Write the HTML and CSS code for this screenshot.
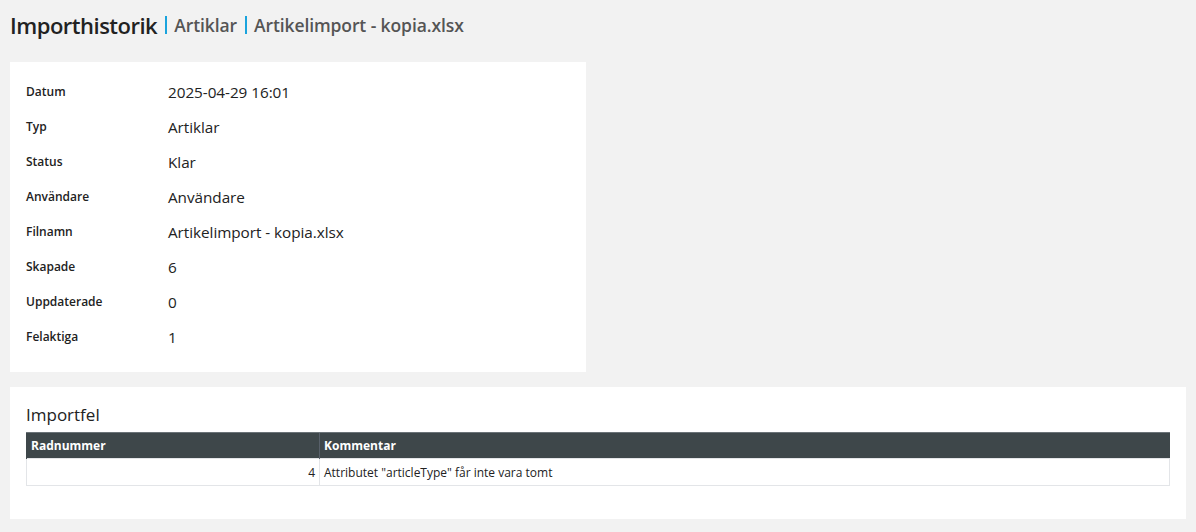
FILE: index.html
```html
<!DOCTYPE html>
<html lang="sv">
<head>
<meta charset="utf-8">
<title>Importhistorik</title>
<link rel="stylesheet" href="styles.css">
</head>
<body>
<header class="page-title">
  <h1 class="title-main">Importhistorik</h1>
  <span class="sep"></span>
  <span class="title-sub">Artiklar</span>
  <span class="sep"></span>
  <span class="title-sub">Artikelimport - kopia.xlsx</span>
</header>

<section class="card info-card">
  <dl class="info">
    <div class="info-row"><dt>Datum</dt><dd>2025-04-29 16:01</dd></div>
    <div class="info-row"><dt>Typ</dt><dd>Artiklar</dd></div>
    <div class="info-row"><dt>Status</dt><dd>Klar</dd></div>
    <div class="info-row"><dt>Användare</dt><dd>Användare</dd></div>
    <div class="info-row"><dt>Filnamn</dt><dd>Artikelimport - kopia.xlsx</dd></div>
    <div class="info-row"><dt>Skapade</dt><dd>6</dd></div>
    <div class="info-row"><dt>Uppdaterade</dt><dd>0</dd></div>
    <div class="info-row"><dt>Felaktiga</dt><dd>1</dd></div>
  </dl>
</section>

<section class="card errors-card">
  <h2 class="section-title">Importfel</h2>
  <table class="err-table">
    <thead>
      <tr><th class="col-num">Radnummer</th><th>Kommentar</th></tr>
    </thead>
    <tbody>
      <tr><td class="num">4</td><td>Attributet "articleType" får inte vara tomt</td></tr>
    </tbody>
  </table>
</section>
</body>
</html>
```

FILE: styles.css
```css
* { box-sizing: border-box; }

body {
  margin: 0;
  padding: 0 10px;
  background: #f2f2f2;
  font-family: "Open Sans", "Noto Sans", sans-serif;
  color: #222;
}

.page-title {
  display: flex;
  align-items: center;
  height: 50px;
  margin-bottom: 12px;
}

.title-main {
  margin: 0;
  font-size: 22px;
  font-weight: 600;
  color: #222;
  letter-spacing: -0.5px;
}

.sep {
  width: 2px;
  height: 18px;
  background: #1aa3dd;
  margin: 0 7px 0 8px;
}

.title-sub {
  font-size: 17.5px;
  font-weight: 600;
  color: #555;
  letter-spacing: -0.1px;
}

.card {
  background: #fff;
}

.info-card {
  width: 576px;
  padding: 12px 16px 18px;
}

.info {
  margin: 0;
}

.info-row {
  display: grid;
  grid-template-columns: 142px 1fr;
  height: 35px;
  align-items: start;
  padding-top: 9px;
}

.info-row dt {
  font-size: 12px;
  font-weight: 600;
  line-height: 18px;
  color: #222;
}

.info-row dd {
  margin: -1px 0 0;
  font-size: 15.3px;
  line-height: 20px;
  color: #222;
  letter-spacing: -0.05px;
}

.errors-card {
  margin-top: 15px;
  padding: 16px 16px 33px;
}

.section-title {
  margin: 0 0 5px;
  font-size: 17px;
  font-weight: 400;
  line-height: 24px;
  color: #222;
}

.err-table {
  width: 100%;
  border-collapse: collapse;
  font-size: 12px;
}

.err-table th {
  background: #3e474a;
  color: #fff;
  font-weight: 700;
  text-align: left;
  height: 26px;
  padding: 0 4px;
  border-top: 1px solid #6b7378;
  border-left: 1px solid #58606a;
}

.err-table th:first-child { border-left: 1px solid #3e474a; }

.col-num { width: 293px; }

.err-table td {
  height: 27px;
  padding: 0 4px;
  border: 1px solid #e3e5e8;
  color: #222;
}

.err-table td.num { text-align: right; }
```
